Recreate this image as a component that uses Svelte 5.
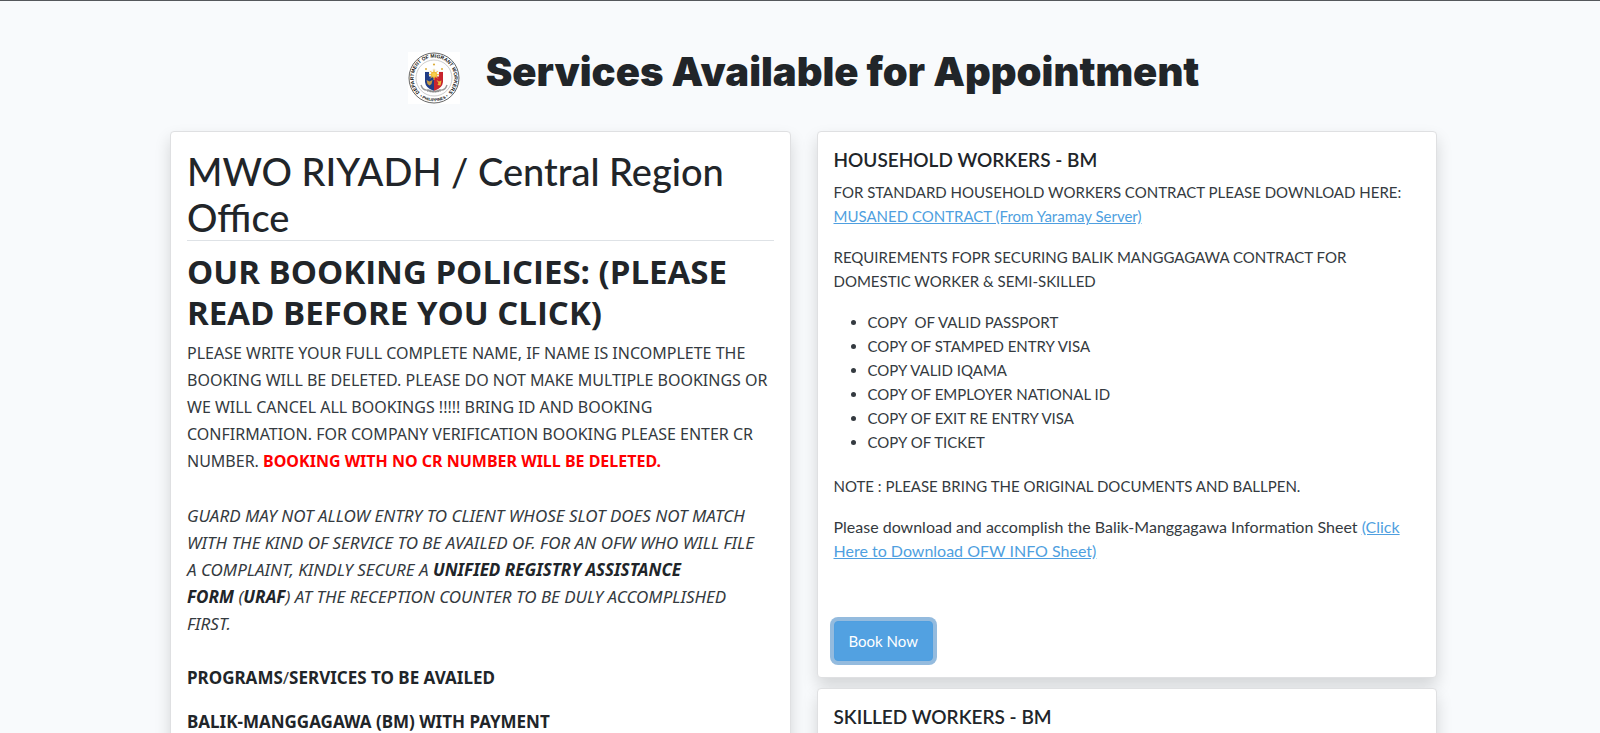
<script lang="ts">
  const householdDocs = [
    "COPY \u00a0OF VALID PASSPORT",
    "COPY OF STAMPED ENTRY VISA",
    "COPY VALID IQAMA",
    "COPY OF EMPLOYER NATIONAL ID",
    "COPY OF EXIT RE ENTRY VISA",
    "COPY OF TICKET"
  ];

  let selected = "";

  function book(service: string) {
    selected = service;
  }
</script>

<div class="page">
  <header>
    <svg class="seal" viewBox="0 0 52 52" role="img" aria-label="Department of Migrant Workers seal">
      <defs>
        <path id="ring-top" d="M11.5 40.2 A20.3 20.3 0 1 1 40.5 40.2" />
        <path id="ring-bottom" d="M11 43.8 A23.4 23.4 0 0 0 41 43.8" />
      </defs>
      <rect width="52" height="52" fill="#fff" />
      <circle cx="26" cy="26" r="25" fill="#fff" stroke="#555" stroke-width="0.9" />
      <circle cx="26" cy="26" r="18" fill="#fff" stroke="#aaa" stroke-width="0.6" />
      <text class="ring"><textPath href="#ring-top" startOffset="50%" text-anchor="middle">DEPARTMENT OF MIGRANT WORKERS</textPath></text>
      <text class="ring small"><textPath href="#ring-bottom" startOffset="50%" text-anchor="middle">• PHILIPPINES •</textPath></text>
      <!-- shield -->
      <path d="M17 19 Q22 21 26 17.5 V39 Q17.5 36 17 30 Z" fill="#203d86" />
      <path d="M35 19 Q30 21 26 17.5 V39 Q34.5 36 35 30 Z" fill="#c8242f" />
      <path d="M17 18.5 Q22 20 26 16 Q30 20 35 18.5 V24.5 H17 Z" fill="#f7f7f2" />
      <path d="M17 20 L21 20 V27 H17 Z" fill="#203d86" />
      <path d="M35 20 L31 20 V27 H35 Z" fill="#c8242f" />
      <path d="M18.5 28 l3 1.5 l3 -1.5 l-1 4 l-2 1.5 l-2 -1.5 Z" fill="#c89a45" />
      <path d="M28.5 28 l2.5 1.5 l2.5 -1 l-1 5 l-3 -.5 l1 -2 Z" fill="#eab63a" />
      <!-- sun and stars -->
      <g stroke="#efb62d" stroke-width="1">
        <path d="M26 17.5 V28 M20.8 22.7 H31.2 M22.3 19 L29.7 26.4 M29.7 19 L22.3 26.4" />
        <circle cx="26" cy="22.7" r="2.6" fill="#f8cf4c" />
      </g>
      <g fill="#dcae3d">
        <circle cx="26" cy="12.5" r="1.1" />
        <circle cx="18" cy="17" r="1" />
        <circle cx="34" cy="17" r="1" />
      </g>
      <path d="M13 33 Q15 39 20 38 Q26 41 32 38 Q37 39 39 33" fill="none" stroke="#999" stroke-width="1.4" />
      <path d="M19 39 Q26 41 33 39" fill="none" stroke="#777" stroke-width="1" stroke-dasharray="1 .6" />
    </svg>
    <h1>Services Available for Appointment</h1>
  </header>

  <main>
    <section class="card policies">
      <h2>MWO RIYADH / Central Region Office</h2>
      <h3>OUR BOOKING POLICIES: (PLEASE READ BEFORE YOU CLICK)</h3>
      <p>
        PLEASE WRITE YOUR FULL COMPLETE NAME, IF NAME IS INCOMPLETE THE BOOKING WILL BE DELETED.
        PLEASE DO NOT MAKE MULTIPLE BOOKINGS OR WE WILL CANCEL ALL BOOKINGS !!!!! BRING ID AND BOOKING<br />
        CONFIRMATION. FOR COMPANY VERIFICATION BOOKING PLEASE ENTER CR<br />
        NUMBER. <strong class="warning">BOOKING WITH NO CR NUMBER WILL BE DELETED.</strong>
      </p>
      <p class="guard">
        GUARD MAY NOT ALLOW ENTRY TO CLIENT WHOSE SLOT DOES NOT MATCH<br />
        WITH THE KIND OF SERVICE TO BE AVAILED OF. FOR AN OFW WHO WILL FILE<br />
        A COMPLAINT, KINDLY SECURE A <strong>UNIFIED REGISTRY ASSISTANCE<br />
        FORM</strong>&nbsp;(<strong>URAF</strong>) AT THE RECEPTION COUNTER TO BE DULY ACCOMPLISHED<br />
        FIRST.
      </p>
      <p class="programs"><strong>PROGRAMS</strong>/<strong>SERVICES TO BE AVAILED</strong></p>
      <p class="programs"><strong>BALIK-MANGGAGAWA (BM) WITH PAYMENT</strong></p>
    </section>

    <div class="services">
      <section class="card">
        <h4>HOUSEHOLD WORKERS - BM</h4>
        <p>
          FOR STANDARD HOUSEHOLD WORKERS CONTRACT PLEASE DOWNLOAD HERE:
          <a href="#musaned">MUSANED CONTRACT (From Yaramay Server)</a>
        </p>
        <p>REQUIREMENTS FOPR SECURING BALIK MANGGAGAWA CONTRACT FOR DOMESTIC WORKER &amp; SEMI-SKILLED</p>
        <ul>
          {#each householdDocs as doc}
            <li>{doc}</li>
          {/each}
        </ul>
        <p>NOTE : PLEASE BRING THE ORIGINAL DOCUMENTS AND BALLPEN.</p>
        <p class="download">
          Please download and accomplish the Balik-Manggagawa Information Sheet
          <a href="#info-sheet">(Click<br />Here to Download OFW INFO Sheet)</a>
        </p>
        <button class="book" type="button" on:click={() => book("household")}>Book Now</button>
      </section>

      <section class="card">
        <h4>SKILLED WORKERS - BM</h4>
      </section>
    </div>
  </main>
</div>

<style>
  :global(body) {
    background: #f8fafc;
    overflow: hidden;
  }

  .page {
    box-sizing: border-box;
    height: 100vh;
    overflow: hidden;
    border-top: 1px solid #55585c;
    padding-left: 7px;
    font-family: Lato, "Open Sans", sans-serif;
    font-size: 15px;
    line-height: 24px;
    color: #212529;
  }

  header {
    display: flex;
    justify-content: center;
    gap: 26px;
    padding: 51px 0 27px;
  }

  .seal {
    width: 52px;
    height: 52px;
    flex: none;
  }

  .ring {
    font: bold 5px "Liberation Sans", sans-serif;
    fill: #111;
  }

  .ring.small {
    font-size: 4px;
  }

  h1 {
    margin: 0;
    font-family: Inter, Roboto, sans-serif;
    font-size: 40px;
    font-weight: 900;
    line-height: 40px;
  }

  main {
    display: grid;
    grid-template-columns: 1fr 1fr;
    gap: 26px;
    max-width: 1267px;
    margin: 0 auto;
  }

  .services {
    display: flex;
    flex-direction: column;
    gap: 10px;
  }

  .card {
    background: #fff;
    border: 1px solid #dfe0e2;
    border-radius: 4px;
    padding: 16px;
    box-shadow: 0 8px 16px rgba(0, 0, 0, 0.15);
  }

  .policies {
    font-family: "Noto Sans", "Open Sans", sans-serif;
    font-size: 16px;
    line-height: 27px;
  }

  h2 {
    margin: 0 0 10px;
    border-bottom: 1px solid #dee2e6;
    font-family: Lato, sans-serif;
    font-size: 38px;
    font-weight: 500;
    line-height: 46px;
  }

  h3 {
    margin: 0 0 7px;
    font-family: "Open Sans", sans-serif;
    font-size: 33px;
    font-weight: 700;
    line-height: 41px;
  }

  h4 {
    margin: 0 0 8px;
    font-size: 19px;
    font-weight: 600;
    line-height: 24px;
  }

  p {
    margin: 0 0 17px;
    color: #343a40;
  }

  strong {
    color: #212529;
  }

  .policies p {
    margin-bottom: 27px;
  }

  .policies .programs {
    margin-bottom: 17px;
    font-size: 17px;
  }

  .guard {
    font-size: 17px;
    font-style: italic;
  }

  .warning {
    color: #f00;
  }

  ul {
    margin: 0 0 20px;
    padding-left: 34px;
    color: #343a40;
  }

  .download {
    font-size: 16px;
  }

  a {
    color: #4f9fe0;
    text-decoration: underline;
  }

  .book {
    margin-top: 41px;
    padding: 8px 14px;
    border: 1px solid #4f9fe0;
    border-radius: 4px;
    background: #52a1e1;
    box-shadow: 0 0 0 4px #94bbde;
    color: #fff;
    font: inherit;
    line-height: 22px;
    cursor: pointer;
  }
</style>
